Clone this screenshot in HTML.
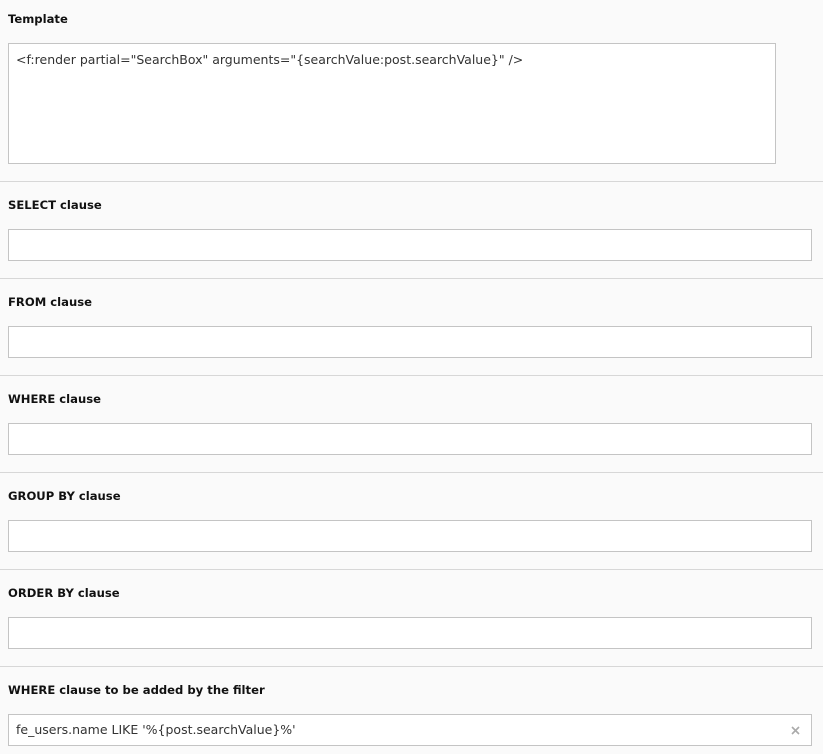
<!DOCTYPE html>
<html><head><meta charset="utf-8"><style>
html,body{margin:0;padding:0;background:#fafafa;width:823px;height:754px;overflow:hidden;position:relative}
.l{position:absolute;left:8px;font:bold 11.6px "DejaVu Sans",Verdana,sans-serif;color:#111}
.sep{position:absolute;left:0;width:823px;height:1px;background:#d7d7d7}
.in{position:absolute;left:8px;width:802px;height:30px;background:#fff;border:1px solid #c4c4c4;box-sizing:content-box}
.t{position:absolute;left:7px;font:12.5px "DejaVu Sans",Tahoma,sans-serif;color:#333;white-space:nowrap}
</style></head><body>
<div class="l" style="top:12px">Template</div>
<div class="in" style="top:43px;width:766px;height:119px"><div class="t" style="top:8px">&lt;f:render partial="SearchBox" arguments="{searchValue:post.searchValue}" /&gt;</div></div>
<div class="sep" style="top:181px"></div>
<div class="l" style="top:198px">SELECT clause</div>
<div class="in" style="top:229px"></div>
<div class="sep" style="top:278px"></div>
<div class="l" style="top:295px">FROM clause</div>
<div class="in" style="top:326px"></div>
<div class="sep" style="top:375px"></div>
<div class="l" style="top:392px">WHERE clause</div>
<div class="in" style="top:423px"></div>
<div class="sep" style="top:472px"></div>
<div class="l" style="top:489px">GROUP BY clause</div>
<div class="in" style="top:520px"></div>
<div class="sep" style="top:569px"></div>
<div class="l" style="top:586px">ORDER BY clause</div>
<div class="in" style="top:617px"></div>
<div class="sep" style="top:666px"></div>
<div class="l" style="top:683px">WHERE clause to be added by the filter</div>
<div class="in" style="top:714px"><div class="t" style="top:7px">fe_users.name LIKE '%{post.searchValue}%'</div>
<svg style="position:absolute;left:782px;top:11px" width="9" height="9" viewBox="0 0 9 9"><path d="M1 1L8 8M8 1L1 8" stroke="#aaa" stroke-width="1.6"/></svg></div>
</body></html>
